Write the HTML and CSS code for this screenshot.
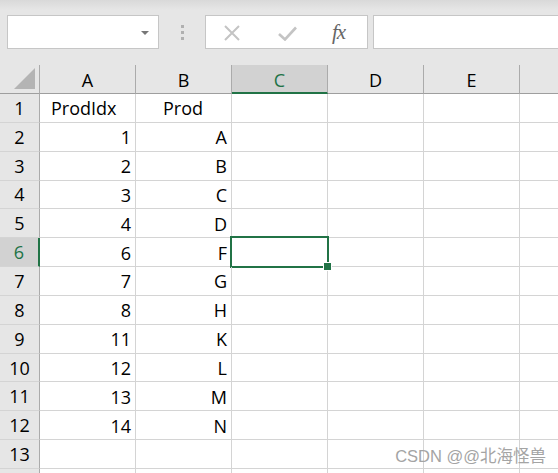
FILE: index.html
```html
<!DOCTYPE html>
<html>
<head>
<meta charset="utf-8">
<link rel="stylesheet" href="styles.css">
</head>
<body>
<div class="app">
  <div class="toolbar">
    <div class="namebox"><span class="caret"></span></div>
    <div class="dots"><i></i><i></i><i></i></div>
    <div class="fbtns">
      <svg class="ico" width="16" height="16" viewBox="0 0 16 16"><path d="M1 1 L15 15 M15 1 L1 15" stroke="#c4c4c4" stroke-width="2" fill="none"/></svg>
      <svg class="ico" width="19" height="15" viewBox="0 0 19 15"><path d="M1 8 L7 13.5 L18 1.5" stroke="#c4c4c4" stroke-width="2.6" fill="none"/></svg>
      <span class="fx">fx</span>
    </div>
    <div class="fbar"></div>
  </div>
  <div class="sheet">
    <div class="corner"><span class="tri"></span></div>
    <div class="ch">A</div><div class="ch">B</div><div class="ch sel">C</div><div class="ch">D</div><div class="ch">E</div><div class="ch"></div>

    <div class="rh">1</div><div class="c l">ProdIdx</div><div class="c l pad">Prod</div><div class="c"></div><div class="c"></div><div class="c"></div><div class="c"></div>
    <div class="rh">2</div><div class="c">1</div><div class="c">A</div><div class="c"></div><div class="c"></div><div class="c"></div><div class="c"></div>
    <div class="rh">3</div><div class="c">2</div><div class="c">B</div><div class="c"></div><div class="c"></div><div class="c"></div><div class="c"></div>
    <div class="rh">4</div><div class="c">3</div><div class="c">C</div><div class="c"></div><div class="c"></div><div class="c"></div><div class="c"></div>
    <div class="rh">5</div><div class="c">4</div><div class="c">D</div><div class="c"></div><div class="c"></div><div class="c"></div><div class="c"></div>
    <div class="rh sel">6</div><div class="c">6</div><div class="c">F</div><div class="c active"></div><div class="c"></div><div class="c"></div><div class="c"></div>
    <div class="rh">7</div><div class="c">7</div><div class="c">G</div><div class="c"></div><div class="c"></div><div class="c"></div><div class="c"></div>
    <div class="rh">8</div><div class="c">8</div><div class="c">H</div><div class="c"></div><div class="c"></div><div class="c"></div><div class="c"></div>
    <div class="rh">9</div><div class="c">11</div><div class="c">K</div><div class="c"></div><div class="c"></div><div class="c"></div><div class="c"></div>
    <div class="rh">10</div><div class="c">12</div><div class="c">L</div><div class="c"></div><div class="c"></div><div class="c"></div><div class="c"></div>
    <div class="rh">11</div><div class="c">13</div><div class="c">M</div><div class="c"></div><div class="c"></div><div class="c"></div><div class="c"></div>
    <div class="rh">12</div><div class="c">14</div><div class="c">N</div><div class="c"></div><div class="c"></div><div class="c"></div><div class="c"></div>
    <div class="rh">13</div><div class="c"></div><div class="c"></div><div class="c"></div><div class="c"></div><div class="c"></div><div class="c"></div>
    <div class="rh"></div><div class="c"></div><div class="c"></div><div class="c"></div><div class="c"></div><div class="c"></div><div class="c"></div>
  </div>
  <div class="watermark">CSDN @@北海怪兽</div>
</div>
</body>
</html>
```

FILE: styles.css
```css
* { box-sizing: border-box; }
html, body { margin: 0; padding: 0; background: #fff; }
body { width: 558px; height: 473px; overflow: hidden; font-family: "Open Sans", "Liberation Sans", "Noto Sans CJK SC", sans-serif; }
.app { position: relative; width: 558px; height: 473px; overflow: hidden; }

.toolbar {
  height: 65px;
  background: linear-gradient(#d9d9d9 0px, #e6e6e6 10px, #e6e6e6 100%);
  display: flex;
  align-items: flex-start;
  padding-top: 15px;
  padding-left: 7px;
}
.namebox {
  width: 152px; height: 34px;
  background: #fff;
  border: 1px solid #c6c6c6;
  position: relative;
}
.caret {
  position: absolute; left: 133px; top: 15px;
  width: 0; height: 0;
  border-left: 4px solid transparent;
  border-right: 4px solid transparent;
  border-top: 4px solid #777;
}
.dots {
  width: 46px; height: 34px;
  display: flex; flex-direction: column; align-items: center; justify-content: center; gap: 3px;
}
.dots i { display: block; width: 3px; height: 3px; background: #b0b0b0; }
.fbtns {
  width: 163px; height: 34px;
  background: #fff;
  border: 1px solid #c6c6c6;
  display: flex; align-items: center;
  padding-left: 18px;
}
.fbtns .ico:first-child { margin-top: 1px; }
.fbtns .ico:nth-child(2) { margin-left: 38px; margin-top: 2px; }
.fx {
  margin-left: 35px;
  font-family: "Liberation Serif", serif;
  font-style: italic;
  font-size: 21px;
  color: #666;
  letter-spacing: -1px;
  margin-top: 1px;
}
.fbar {
  margin-left: 5px;
  flex: 1; height: 34px;
  background: #fff;
  border: 1px solid #c6c6c6;
  border-right: none;
}

.sheet {
  display: grid;
  grid-template-columns: 40px repeat(5, 96px) 40px;
  grid-template-rows: 29px repeat(13, 28.85px) 30px;
}
.corner {
  background: #e6e6e6;
  border-right: 1px solid #ababab;
  border-bottom: 1px solid #9e9e9e;
  position: relative;
}
.tri {
  position: absolute; right: 4px; bottom: 4px;
  width: 0; height: 0;
  border-left: 21px solid transparent;
  border-bottom: 21px solid #b4b4b4;
}
.ch {
  background: #e6e6e6;
  border-right: 1px solid #ababab;
  border-bottom: 1px solid #9e9e9e;
  display: flex; align-items: center; justify-content: center;
  font-size: 18px; color: #000;
  padding-top: 2px;
}
.ch.sel {
  background: #d2d2d2;
  color: #217346;
  border-bottom: 2px solid #217346;
  padding-top: 3px;
}
.rh {
  background: #e6e6e6;
  border-right: 1px solid #ababab;
  border-bottom: 1px solid #d4d4d4;
  display: flex; align-items: center; justify-content: center;
  font-size: 18px; color: #000;
}
.rh.sel {
  background: #d2d2d2;
  color: #217346;
  border-right: 2px solid #217346;
}
.c {
  border-right: 1px solid #d4d4d4;
  border-bottom: 1px solid #d4d4d4;
  display: flex; align-items: center; justify-content: flex-end;
  padding: 1px 4px 0 4px;
  font-size: 18px; color: #000;
  position: relative;
}
.c.l { justify-content: flex-start; padding-left: 11px; }
.c.l.pad { padding-left: 27px; }
.c.active::after {
  content: "";
  position: absolute;
  left: -2px; top: -2px; right: -2px; bottom: -2px;
  border: 2px solid #217346;
}
.c.active::before {
  content: "";
  position: absolute;
  right: -5px; bottom: -5px;
  width: 7px; height: 7px;
  background: #217346;
  border: 1px solid #fff;
  z-index: 2;
}
.watermark {
  position: absolute;
  right: 12px; top: 443px;
  font-family: "Liberation Sans", "Noto Sans CJK SC", sans-serif;
  font-size: 16.5px;
  color: #a4a4a4;
}
```
